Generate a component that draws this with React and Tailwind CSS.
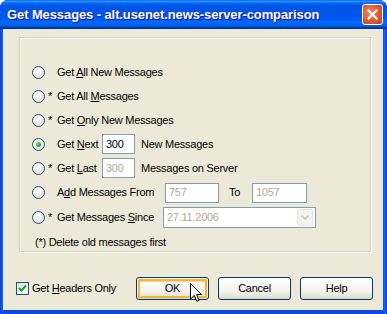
import React from "react";

function Radio({ checked }) {
  return (
    <span className="relative w-[13px] h-[13px] shrink-0 rounded-full border border-[#1c5180] bg-[radial-gradient(circle_at_35%_30%,#ffffff_0%,#f2f1ea_45%,#d6d3c6_100%)] flex items-center justify-center">
      {checked && (
        <span className="w-[5px] h-[5px] rounded-full bg-[radial-gradient(circle_at_40%_35%,#6ee36e_0%,#21a121_60%,#0f7a0f_100%)]" />
      )}
    </span>
  );
}

function Field({ value, disabled, w }) {
  return (
    <div className={`h-[20px] ${w} border border-[#7f9db9] bg-white flex items-center px-[3px] ${disabled ? "text-[#aca899]" : "text-black"}`}>
      {value}
    </div>
  );
}

function Row({ checked, star, children, tall }) {
  return (
    <div className={`flex items-center ${tall ? "h-[25px]" : "h-[24px]"}`}>
      <Radio checked={checked} />
      <span className="w-[12px] pl-[3px]">{star ? "*" : ""}</span>
      {children}
    </div>
  );
}

function Button({ children, focus }) {
  return (
    <div className="w-[73px] h-[23px] rounded-[3px] border border-[#003c74] bg-[linear-gradient(to_bottom,#ffffff_0%,#f4f3ee_60%,#e6e3d6_90%,#d6d0c5_100%)] p-[1px]">
      <div className={`w-full h-full rounded-[2px] flex items-center justify-center ${focus ? "shadow-[inset_0_0_0_2px_#f8b330,inset_0_1px_0_2px_#fdd889]" : ""}`}>
        {children}
      </div>
    </div>
  );
}

export default function App() {
  return (
    <div className="w-[387px] h-[314px] bg-white font-['Liberation_Sans',Arial,sans-serif] text-[11px] tracking-[-0.25px] text-black">
      <div className="flex flex-col h-full rounded-t-[8px] overflow-hidden bg-[linear-gradient(to_right,#0831d9_0px,#166aee_2px,#0a4be0_3px,#0a4be0_383px,#166aee_385px,#0831d9_387px)]">
        {/* title bar */}
        <div className="h-[29px] shrink-0 flex items-center justify-between pl-[7px] pr-[4px] bg-[linear-gradient(to_bottom,#0058ee_0%,#3593ff_4%,#288eff_6%,#127dff_8%,#036ffc_10%,#0262ee_14%,#0057e5_20%,#0054e3_24%,#0055eb_56%,#005bf5_66%,#026afe_76%,#0062ef_86%,#0052d6_92%,#0040ab_94%,#003092_100%)]">
          <span className="text-white font-bold text-[13px] tracking-[-0.1px] pt-[1px] [text-shadow:1px_1px_0_#0f1089]">
            Get Messages - alt.usenet.news-server-comparison
          </span>
          <div className="w-[21px] h-[21px] rounded-[3px] border border-white bg-[radial-gradient(circle_at_40%_40%,#f08a6c_0%,#e0603c_45%,#c2401b_100%)] flex items-center justify-center">
            <svg width="11" height="11" viewBox="0 0 11 11">
              <path d="M1.5 1.5 L9.5 9.5 M9.5 1.5 L1.5 9.5" stroke="#fff" strokeWidth="2.2" strokeLinecap="square" />
            </svg>
          </div>
        </div>

        {/* client */}
        <div className="flex-1 ml-[3px] mr-[4px] mb-[4px] bg-[#ece9d8] flex flex-col">
          <div className="ml-[16px] mt-[8px] w-[352px] h-[215px] border border-[#d0d0bf] shadow-[inset_1px_1px_0_#fff,1px_1px_0_#fff] pl-[12px] pt-[22px]">
            <Row>
              <span>Get <u>A</u>ll New Messages</span>
            </Row>
            <Row star>
              <span>Get All <u>M</u>essages</span>
            </Row>
            <Row star>
              <span>Get <u>O</u>nly New Messages</span>
            </Row>
            <Row checked>
              <span className="w-[45px]">Get <u>N</u>ext</span>
              <Field value="300" w="w-[33px]" />
              <span className="ml-[6px]">New Messages</span>
            </Row>
            <Row star>
              <span className="w-[45px]">Get <u>L</u>ast</span>
              <Field value="300" disabled w="w-[33px]" />
              <span className="ml-[6px]">Messages on Server</span>
            </Row>
            <Row tall>
              <span className="w-[108px]">A<u>d</u>d Messages From</span>
              <Field value="757" disabled w="w-[54px]" />
              <span className="ml-[10px] w-[23px]">To</span>
              <Field value="1057" disabled w="w-[55px]" />
            </Row>
            <Row star tall>
              <span className="w-[106px]">Get Messages <u>S</u>ince</span>
              <div className="h-[21px] w-[153px] border border-[#7f9db9] bg-white flex items-center justify-between pl-[3px] pr-[2px] text-[#aca899]">
                <span>27.11.2006</span>
                <div className="w-[16px] h-[17px] rounded-[2px] border border-[#e8e6dc] bg-[#f4f3ee] flex items-center justify-center">
                  <svg width="8" height="5" viewBox="0 0 8 5">
                    <path d="M0.5 0.5 L4 4 L7.5 0.5" fill="none" stroke="#c9c7ba" strokeWidth="1.6" />
                  </svg>
                </div>
              </div>
            </Row>
            <div className="h-[25px] flex items-center pl-[3px]">(*) Delete old messages first</div>
          </div>

          {/* bottom */}
          <div className="mt-[25px] h-[23px] flex items-center pl-[13px] pr-[10px]">
            <span className="w-[13px] h-[13px] border border-[#1c5180] bg-[linear-gradient(135deg,#dcdcd7,#ffffff)] flex items-center justify-center">
              <svg width="9" height="9" viewBox="0 0 9 9">
                <path d="M1 4 L3.5 6.5 L8 1.5" fill="none" stroke="#21a121" strokeWidth="2" />
              </svg>
            </span>
            <span className="ml-[3px]">Get <u>H</u>eaders Only</span>
            <div className="ml-auto flex gap-[9px]">
              <div className="relative">
                <Button focus>OK</Button>
                <svg className="absolute left-[54px] top-[6px]" width="13" height="20" viewBox="0 0 13 20">
                  <path d="M0.5 0.5 L0.5 16 L4.3 12.3 L6.8 18.3 L9 17.4 L6.6 11.5 L11.5 11.5 Z" fill="#fff" stroke="#000" strokeWidth="1" />
                </svg>
              </div>
              <Button>Cancel</Button>
              <Button>Help</Button>
            </div>
          </div>
        </div>
      </div>
    </div>
  );
}
